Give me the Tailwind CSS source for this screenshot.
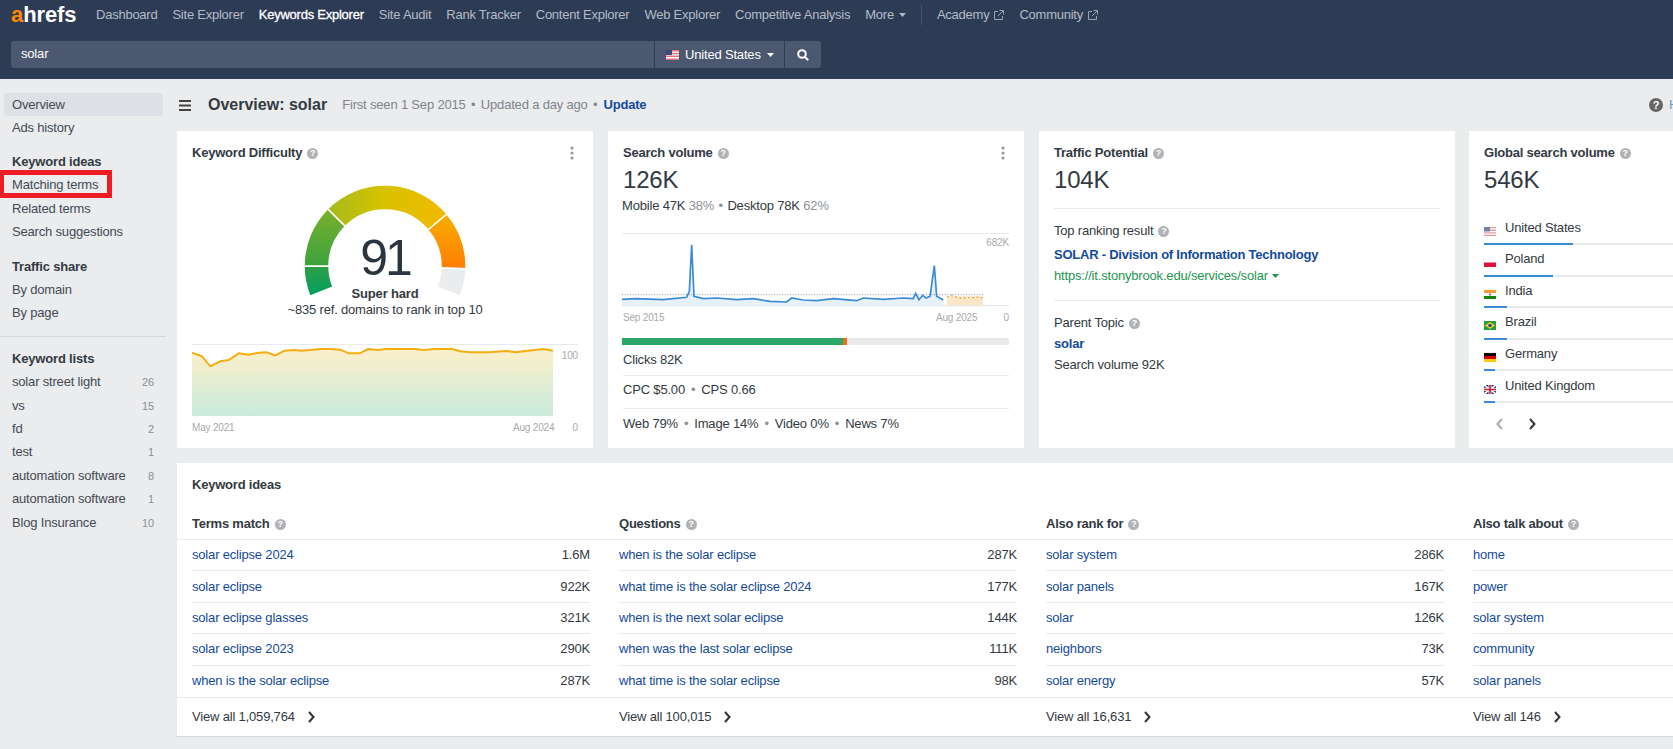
<!DOCTYPE html>
<html lang="en">
<head>
<meta charset="UTF-8" />
<title>Overview: solar</title>
<script src="https://cdn.jsdelivr.net/npm/@tailwindcss/browser@4"></script>
</head>
<body class="w-[1673px] h-[749px] overflow-hidden bg-[#ebecee] text-[13px] leading-[18px] tracking-[-0.18px] text-[#333a42] [font-family:'Liberation_Sans',Arial,sans-serif]">

<!-- top bar -->
<header class="h-[79px] bg-[#2e3b55] pl-[11px]">
  <nav class="h-[30px] flex items-center text-[#b4bbc8] tracking-[-0.24px]">
    <span class="w-[85px] text-[22px] leading-[30px] font-bold tracking-[-0.1px] text-white"><span class="text-[#ff8800]">a</span>hrefs</span>
    <div class="flex items-center gap-[15px]">
      <a>Dashboard</a>
      <a>Site Explorer</a>
      <a class="text-white [-webkit-text-stroke:0.3px_white]">Keywords Explorer</a>
      <a>Site Audit</a>
      <a>Rank Tracker</a>
      <a>Content Explorer</a>
      <a>Web Explorer</a>
      <a>Competitive Analysis</a>
      <a class="flex items-center gap-[5px]">More <svg width="7" height="4" viewBox="0 0 7 4"><path d="M0 0h7L3.5 4z" fill="#b4bbc8"/></svg></a>
      <span class="w-px h-[20px] bg-[#48546c]"></span>
      <a class="flex items-center gap-[5px]">Academy
        <svg width="10" height="10" viewBox="0 0 10 10" fill="none" stroke="#9aa3b3"><path d="M4 1.5H.5v8h8V6M5.500 .5h4v4M9.500 .5L4 6"/></svg>
      </a>
      <a class="flex items-center gap-[5px]">Community
        <svg width="10" height="10" viewBox="0 0 10 10" fill="none" stroke="#9aa3b3"><path d="M4 1.5H.5v8h8V6M5.500 .5h4v4M9.500 .5L4 6"/></svg>
      </a>
    </div>
  </nav>
  <div class="mt-[11px] w-[810px] h-[27px] flex gap-px text-white">
    <div class="w-[643px] bg-[#4b586f] rounded-l-[3px] pl-[10px] leading-[25px]">solar</div>
    <div class="w-[129px] bg-[#4b586f] flex items-center pl-[11px] gap-[6px]">
      <svg width="13" height="10" viewBox="0 0 13 10">
        <rect width="13" height="10" fill="#fff"/>
        <path d="M0 0h13v1.400H0zM0 2.800h13v1.400H0zM0 5.600h13v1.400H0zM0 8.400h13V10H0z" fill="#d8737c"/>
        <rect width="6" height="5" fill="#3c4a78"/>
      </svg>
      United States
      <svg width="7" height="4" viewBox="0 0 7 4"><path d="M0 0h7L3.500 4z" fill="#fff"/></svg>
    </div>
    <div class="flex-1 bg-[#4b586f] rounded-r-[3px] flex items-center justify-center">
      <svg width="12" height="12" viewBox="0 0 12 12" fill="none" stroke="#fff" stroke-width="2"><circle cx="5" cy="5" r="3.800"/><path d="M8 8l3.200 3.200"/></svg>
    </div>
  </div>
</header>

<div class="relative flex h-[670px]">
  <!-- sidebar -->
  <aside class="w-[166px] shrink-0 pt-[14px] text-[#444b54]">
    <div class="ml-[4px] w-[159px] h-[23.250px] pl-[8px] flex items-center bg-[#dfe0e6] rounded-[3px]">Overview</div>
    <div class="ml-[4px] pl-[8px] h-[23.250px] flex items-center">Ads history</div>

    <div class="mt-[11px] ml-[4px] pl-[8px] h-[23.250px] flex items-center font-bold text-[#333a42]">Keyword ideas</div>
    <div class="ml-[4px] pl-[8px] h-[23.250px] flex items-center">Matching terms</div>
    <div class="ml-[4px] pl-[8px] h-[23.250px] flex items-center">Related terms</div>
    <div class="ml-[4px] pl-[8px] h-[23.250px] flex items-center">Search suggestions</div>

    <div class="mt-[11.500px] ml-[4px] pl-[8px] h-[23.250px] flex items-center font-bold text-[#333a42]">Traffic share</div>
    <div class="ml-[4px] pl-[8px] h-[23.250px] flex items-center">By domain</div>
    <div class="ml-[4px] pl-[8px] h-[23.250px] flex items-center">By page</div>

    <div class="mt-[11.500px] h-px bg-[#d8d9dd]"></div>

    <div class="mt-[10px] ml-[4px] pl-[8px] h-[23.250px] flex items-center font-bold text-[#333a42]">Keyword lists</div>
    <div class="ml-[4px] w-[159px] pl-[8px] pr-[9px] h-[23.400px] flex items-center justify-between">solar street light <span class="text-[11px] text-[#8a8f96]">26</span></div>
    <div class="ml-[4px] w-[159px] pl-[8px] pr-[9px] h-[23.400px] flex items-center justify-between">vs <span class="text-[11px] text-[#8a8f96]">15</span></div>
    <div class="ml-[4px] w-[159px] pl-[8px] pr-[9px] h-[23.400px] flex items-center justify-between">fd <span class="text-[11px] text-[#8a8f96]">2</span></div>
    <div class="ml-[4px] w-[159px] pl-[8px] pr-[9px] h-[23.400px] flex items-center justify-between">test <span class="text-[11px] text-[#8a8f96]">1</span></div>
    <div class="ml-[4px] w-[159px] pl-[8px] pr-[9px] h-[23.400px] flex items-center justify-between">automation software <span class="text-[11px] text-[#8a8f96]">8</span></div>
    <div class="ml-[4px] w-[159px] pl-[8px] pr-[9px] h-[23.400px] flex items-center justify-between">automation software <span class="text-[11px] text-[#8a8f96]">1</span></div>
    <div class="ml-[4px] w-[159px] pl-[8px] pr-[9px] h-[23.400px] flex items-center justify-between">Blog Insurance <span class="text-[11px] text-[#8a8f96]">10</span></div>
  </aside>

  <!-- red annotation box -->
  <div class="absolute left-0 top-[91px] w-[112px] h-[28px] border-[5px] border-l-[4px] border-[#ee1c25]"></div>

  <main class="flex-1 min-w-0 overflow-hidden pl-[11px]">
    <div class="h-[52px] flex items-center">
      <svg class="ml-[2px]" width="12" height="11" viewBox="0 0 12 11" fill="#444"><path d="M0 0h12v2H0zM0 4.500h12v2H0zM0 9h12v2H0z"/></svg>
      <h1 class="ml-[17px] text-[16px] font-bold tracking-normal text-[#333a42]">Overview: solar</h1>
      <span class="ml-[15px] text-[#80858c]">First seen 1 Sep 2015 <span class="mx-[2px]">•</span> Updated a day ago <span class="mx-[2px]">•</span></span>
      <a class="ml-[4px] font-bold text-[#144a9c]">Update</a>
      <div class="ml-auto w-[24px] overflow-hidden flex items-center gap-[6px] text-[#6a9cc0]">
        <span class="w-[14px] h-[14px] shrink-0 rounded-full bg-[#666] text-white text-[11px] leading-[14px] font-bold text-center">?</span>
        <span>Help</span>
      </div>
    </div>

    <div class="flex gap-[15px] h-[317px]">
      <!-- keyword difficulty -->
      <section class="w-[416px] shrink-0 bg-white px-[15px] pt-[13px]">
        <div class="flex items-center justify-between">
          <div class="flex items-center gap-[5px] font-bold tracking-[-0.22px]">Keyword Difficulty
            <span class="w-[11px] h-[11px] rounded-full bg-[#b0b2b5] text-white text-[9px] leading-[11px] font-bold text-center">?</span>
          </div>
          <svg class="mr-[4px]" width="4" height="14" viewBox="0 0 4 14" fill="#999"><circle cx="2" cy="2" r="1.600"/><circle cx="2" cy="7" r="1.600"/><circle cx="2" cy="12" r="1.600"/></svg>
        </div>
        <div class="relative w-[170px] h-[120px] mx-auto mt-[19px]">
          <svg width="170" height="120" viewBox="0 0 170 120">
            <defs>
              <linearGradient id="gaugeA" x1="0" y1="0" x2="0" y2="1"><stop offset="0" stop-color="#2e9e45"/><stop offset="1" stop-color="#00a060"/></linearGradient>
              <linearGradient id="gaugeB" x1="0" y1="0" x2="0" y2="1"><stop offset="0" stop-color="#7cb02c"/><stop offset="1" stop-color="#3aa33e"/></linearGradient>
              <linearGradient id="gaugeC" x1="0" y1="0" x2="1" y2="0"><stop offset="0" stop-color="#a2bb1c"/><stop offset="0.45" stop-color="#d6c200"/><stop offset="1" stop-color="#f3b900"/></linearGradient>
              <linearGradient id="gaugeD" x1="0" y1="0" x2="0" y2="1"><stop offset="0" stop-color="#f7ae00"/><stop offset="1" stop-color="#ff7d00"/></linearGradient>
            </defs>
            <g stroke="#fff" stroke-width="1.500">
              <path d="M9.900 115.300A81 81 0 0 1 4 85H29A56 56 0 0 0 33.100 106Z" fill="url(#gaugeA)"/>
              <path d="M4 85A81 81 0 0 1 27.700 27.700L45.400 45.400A56 56 0 0 0 29 85Z" fill="url(#gaugeB)"/>
              <path d="M27.700 27.700A81 81 0 0 1 147 33L127.900 49A56 56 0 0 0 45.400 45.400Z" fill="url(#gaugeC)"/>
              <path d="M147 33A81 81 0 0 1 166 87.800L141 87A56 56 0 0 0 127.900 49Z" fill="url(#gaugeD)"/>
              <path d="M166 87.800A81 81 0 0 1 160.100 115.300L136.900 106A56 56 0 0 0 141 87Z" fill="#ebecee"/>
            </g>
          </svg>
          <div class="absolute inset-x-0 top-[52px] text-center text-[50px] leading-[51px] tracking-[-3px] text-[#2c3440]">91</div>
        </div>
        <div class="relative -mt-[15px] text-center leading-[16px]">
          <div class="font-bold">Super hard</div>
          <div>~835 ref. domains to rank in top 10</div>
        </div>
        <div class="mt-[26px] border-t border-[#e9eaec] flex justify-between">
          <svg class="block" width="361" height="71" viewBox="75 663 1083 213">
            <defs><linearGradient id="kdFill" x1="0" y1="0" x2="0" y2="1"><stop offset="0" stop-color="#fdf0c8"/><stop offset="1" stop-color="#c9eadd"/></linearGradient></defs>
            <path d="M75 686L105 697L130 727L160 712L185 708L215 688L245 692L270 687L298 685L325 694L352 680L380 678L405 680L460 675L490 675L520 677L545 688L578 688L603 675L635 678L655 675L745 675L770 678L800 675L855 675L880 682L910 685L965 685L1020 681L1048 685L1075 681L1130 675L1158 680V876H75Z" fill="url(#kdFill)"/>
            <path d="M75 686L105 697L130 727L160 712L185 708L215 688L245 692L270 687L298 685L325 694L352 680L380 678L405 680L460 675L490 675L520 677L545 688L578 688L603 675L635 678L655 675L745 675L770 678L800 675L855 675L880 682L910 685L965 685L1020 681L1048 685L1075 681L1130 675L1158 680" fill="none" stroke="#f5ad10" stroke-width="6"/>
          </svg>
          <span class="mt-[2px] text-[10px] leading-[18px] text-[#aaa]">100</span>
        </div>
        <div class="mt-[4px] flex text-[10px] leading-[16px] text-[#aaa]">
          <span class="w-[321px]">May 2021</span>
          <span class="w-[55px]">Aug 2024</span>
          <span class="ml-auto">0</span>
        </div>
      </section>

      <!-- search volume -->
      <section class="w-[416px] shrink-0 bg-white px-[15px] pt-[13px]">
        <div class="flex items-center justify-between">
          <div class="flex items-center gap-[5px] font-bold tracking-[-0.22px]">Search volume
            <span class="w-[11px] h-[11px] rounded-full bg-[#b0b2b5] text-white text-[9px] leading-[11px] font-bold text-center">?</span>
          </div>
          <svg class="mr-[4px]" width="4" height="14" viewBox="0 0 4 14" fill="#999"><circle cx="2" cy="2" r="1.600"/><circle cx="2" cy="7" r="1.600"/><circle cx="2" cy="12" r="1.600"/></svg>
        </div>
        <div class="mt-[3px] text-[24px] leading-[30px]">126K</div>
        <div class="mt-[2px] -ml-px">Mobile 47K <span class="text-[#8d9197]">38%</span> <span class="mx-[1px] text-[#8d9197]">•</span> Desktop 78K <span class="text-[#8d9197]">62%</span></div>
        <div class="relative mt-[18px] -ml-px border-t border-[#e9eaec]">
          <svg class="block" width="387" height="73" viewBox="156 328 1161 219">
            <rect x="1131" y="515" width="108" height="28" fill="#fde6c8"/>
            <path d="M156 524L200 522L280 525L350 518L358 500L365 360L372 515L400 522L440 520L500 525L550 522L600 530L650 532L665 520L700 526L740 528L790 522L860 528L880 520L940 524L1000 520L1030 522L1037 506L1047 525L1058 512L1068 520L1080 515L1093 423L1100 515L1120 526V543H156Z" fill="#e6f1fb"/>
            <path d="M156 510H1239" stroke="#777" stroke-width="2.500" stroke-dasharray="3 5" fill="none"/>
            <path d="M1131 517L1145 513L1160 518L1175 521L1190 518L1205 520L1220 517L1239 520" stroke="#f58a1f" stroke-width="3.500" stroke-dasharray="5 8" fill="none"/>
            <path d="M156 524L200 522L280 525L350 518L358 500L365 360L372 515L400 522L440 520L500 525L550 522L600 530L650 532L665 520L700 526L740 528L790 522L860 528L880 520L940 524L1000 520L1030 522L1037 506L1047 525L1058 512L1068 520L1080 515L1093 423L1100 515L1120 526" fill="none" stroke="#3a8ad8" stroke-width="5"/>
            <path d="M156 543H1317" stroke="#e3e4e7" stroke-width="3"/>
          </svg>
          <span class="absolute right-0 top-[2px] text-[10px] leading-[14px] text-[#aaa]">682K</span>
        </div>
        <div class="mt-[4px] flex text-[10px] leading-[14px] text-[#aaa]">
          <span class="w-[313px]">Sep 2015</span>
          <span>Aug 2025</span>
          <span class="ml-auto">0</span>
        </div>
        <div class="mt-[13px] -ml-px h-[7px] flex bg-[#e9eaec]">
          <div class="w-[221px] bg-[#2aa768]"></div>
          <div class="w-[4px] bg-[#f26c16]"></div>
        </div>
        <div class="h-[31px] flex items-center border-b border-[#e9eaec]">Clicks 82K</div>
        <div class="h-[33px] pb-[4px] flex items-center border-b border-[#e9eaec]">CPC $5.00 <span class="mx-[6px] text-[#8d9197]">•</span> CPS 0.66</div>
        <div class="h-[30px] flex items-center">Web 79% <span class="mx-[6px] text-[#8d9197]">•</span> Image 14% <span class="mx-[6px] text-[#8d9197]">•</span> Video 0% <span class="mx-[6px] text-[#8d9197]">•</span> News 7%</div>
      </section>

      <!-- traffic potential -->
      <section class="w-[416px] shrink-0 bg-white px-[15px] pt-[13px]">
        <div class="flex items-center gap-[5px] font-bold tracking-[-0.22px]">Traffic Potential
          <span class="w-[11px] h-[11px] rounded-full bg-[#b0b2b5] text-white text-[9px] leading-[11px] font-bold text-center">?</span>
        </div>
        <div class="mt-[3px] text-[24px] leading-[30px]">104K</div>
        <div class="mt-[13px] border-t border-[#e9eaec]"></div>
        <div class="mt-[13px] flex items-center gap-[5px]">Top ranking result
          <span class="w-[11px] h-[11px] rounded-full bg-[#b0b2b5] text-white text-[9px] leading-[11px] font-bold text-center">?</span>
        </div>
        <div class="mt-[6px] font-bold tracking-[-0.24px] text-[#144a9c]">SOLAR - Division of Information Technology</div>
        <div class="mt-[3px] flex items-center gap-[4px] text-[#1c9650]">https://it.stonybrook.edu/services/solar
          <svg width="7" height="4" viewBox="0 0 7 4"><path d="M0 0h7L3.500 4z" fill="#1c9650"/></svg>
        </div>
        <div class="mt-[15px] border-t border-[#e9eaec]"></div>
        <div class="mt-[13px] flex items-center gap-[5px]">Parent Topic
          <span class="w-[11px] h-[11px] rounded-full bg-[#b0b2b5] text-white text-[9px] leading-[11px] font-bold text-center">?</span>
        </div>
        <div class="mt-[3px] font-bold text-[#144a9c]">solar</div>
        <div class="mt-[3px]">Search volume 92K</div>
      </section>

      <!-- global volume -->
      <section class="w-[416px] shrink-0 -ml-px bg-white px-[15px] pt-[13px]">
        <div class="flex items-center gap-[5px] font-bold tracking-[-0.22px]">Global search volume
          <span class="w-[11px] h-[11px] rounded-full bg-[#b0b2b5] text-white text-[9px] leading-[11px] font-bold text-center">?</span>
        </div>
        <div class="mt-[3px] text-[24px] leading-[30px]">546K</div>
        <div class="mt-[18.400px]">
          <div class="h-[31.600px] flex flex-col justify-end">
            <div class="h-[29.600px] pb-[1px] flex items-center gap-[9px]">
              <svg class="mt-[7px] opacity-70" width="12" height="9" viewBox="0 0 12 9"><rect width="12" height="9" fill="#fff"/><path d="M0 0h12v1.300H0zM0 2.600h12v1.300H0zM0 5.200h12v1.300H0zM0 7.800h12V9H0z" fill="#d8737c"/><rect width="6" height="4.500" fill="#3c4a78"/></svg>
              United States
            </div>
            <div class="h-[2px] bg-[#e9eaec]"><div class="h-full w-[89px] bg-[#3a8ad8]"></div></div>
          </div>
          <div class="h-[31.600px] flex flex-col justify-end">
            <div class="h-[29.600px] pb-[1px] flex items-center gap-[9px]">
              <svg class="mt-[7px]" width="12" height="9" viewBox="0 0 12 9"><rect width="12" height="4.500" fill="#fff"/><rect y="4.500" width="12" height="4.500" fill="#dc143c"/></svg>
              Poland
            </div>
            <div class="h-[2px] bg-[#e9eaec]"><div class="h-full w-[69px] bg-[#3a8ad8]"></div></div>
          </div>
          <div class="h-[31.600px] flex flex-col justify-end">
            <div class="h-[29.600px] pb-[1px] flex items-center gap-[9px]">
              <svg class="mt-[7px]" width="12" height="9" viewBox="0 0 12 9"><rect width="12" height="3" fill="#ff9933"/><rect y="3" width="12" height="3" fill="#fff"/><rect y="6" width="12" height="3" fill="#138808"/><circle cx="6" cy="4.500" r="1.200" fill="#7a78b8"/></svg>
              India
            </div>
            <div class="h-[2px] bg-[#e9eaec]"><div class="h-full w-[23px] bg-[#3a8ad8]"></div></div>
          </div>
          <div class="h-[31.600px] flex flex-col justify-end">
            <div class="h-[29.600px] pb-[1px] flex items-center gap-[9px]">
              <svg class="mt-[7px]" width="12" height="9" viewBox="0 0 12 9"><rect width="12" height="9" fill="#229e45"/><path d="M6 1l5 3.500L6 8 1 4.500z" fill="#f2d21b"/><circle cx="6" cy="4.500" r="1.800" fill="#2b4aa0"/></svg>
              Brazil
            </div>
            <div class="h-[2px] bg-[#e9eaec]"><div class="h-full w-[23px] bg-[#3a8ad8]"></div></div>
          </div>
          <div class="h-[31.600px] flex flex-col justify-end">
            <div class="h-[29.600px] pb-[1px] flex items-center gap-[9px]">
              <svg class="mt-[7px]" width="12" height="9" viewBox="0 0 12 9"><rect width="12" height="3" fill="#000"/><rect y="3" width="12" height="3" fill="#dd0000"/><rect y="6" width="12" height="3" fill="#ffce00"/></svg>
              Germany
            </div>
            <div class="h-[2px] bg-[#e9eaec]"><div class="h-full w-[11px] bg-[#3a8ad8]"></div></div>
          </div>
          <div class="h-[31.600px] flex flex-col justify-end">
            <div class="h-[29.600px] pb-[1px] flex items-center gap-[9px]">
              <svg class="mt-[7px]" width="12" height="9" viewBox="0 0 12 9"><rect width="12" height="9" fill="#2c3a78"/><path d="M0 0l12 9M12 0L0 9" stroke="#fff" stroke-width="1.600"/><path d="M6 0v9M0 4.500h12" stroke="#fff" stroke-width="3"/><path d="M6 0v9M0 4.500h12" stroke="#cf142b" stroke-width="1.600"/></svg>
              United Kingdom
            </div>
            <div class="h-[2px] bg-[#e9eaec]"><div class="h-full w-[11px] bg-[#3a8ad8]"></div></div>
          </div>
        </div>
        <div class="mt-[15px] ml-[12px] flex gap-[26px]">
          <svg width="7" height="12" viewBox="0 0 7 12" fill="none" stroke="#aaa" stroke-width="2"><path d="M6 1L1.500 6 6 11"/></svg>
          <svg width="7" height="12" viewBox="0 0 7 12" fill="none" stroke="#333" stroke-width="2"><path d="M1 1l4.500 5L1 11"/></svg>
        </div>
      </section>
    </div>

    <!-- keyword ideas -->
    <section class="mt-[15px] w-[1709px] h-[273px] bg-white shadow-[0_1px_1px_rgba(0,0,0,0.08)]">
      <div class="pt-[13px] px-[15px] font-bold tracking-[-0.22px]">Keyword ideas</div>
      <div class="grid grid-cols-[398px_398px_398px_398px] gap-x-[29px] px-[15px] pt-[21px] pb-[6px] border-b border-[#e9eaec] font-bold tracking-[-0.22px]">
        <div class="flex items-center gap-[5px]">Terms match <span class="w-[11px] h-[11px] rounded-full bg-[#b0b2b5] text-white text-[9px] leading-[11px] font-bold text-center">?</span></div>
        <div class="flex items-center gap-[5px]">Questions <span class="w-[11px] h-[11px] rounded-full bg-[#b0b2b5] text-white text-[9px] leading-[11px] font-bold text-center">?</span></div>
        <div class="flex items-center gap-[5px]">Also rank for <span class="w-[11px] h-[11px] rounded-full bg-[#b0b2b5] text-white text-[9px] leading-[11px] font-bold text-center">?</span></div>
        <div class="flex items-center gap-[5px]">Also talk about <span class="w-[11px] h-[11px] rounded-full bg-[#b0b2b5] text-white text-[9px] leading-[11px] font-bold text-center">?</span></div>
      </div>
      <div class="grid grid-cols-[398px_398px_398px_398px] gap-x-[29px] px-[15px]">
        <div>
          <div class="h-[31.400px] flex items-center justify-between border-b border-[#e9eaec]"><a class="text-[#144a9c]">solar eclipse 2024</a><span>1.6M</span></div>
          <div class="h-[31.400px] flex items-center justify-between border-b border-[#e9eaec]"><a class="text-[#144a9c]">solar eclipse</a><span>922K</span></div>
          <div class="h-[31.400px] flex items-center justify-between border-b border-[#e9eaec]"><a class="text-[#144a9c]">solar eclipse glasses</a><span>321K</span></div>
          <div class="h-[31.400px] flex items-center justify-between border-b border-[#e9eaec]"><a class="text-[#144a9c]">solar eclipse 2023</a><span>290K</span></div>
          <div class="h-[31.400px] flex items-center justify-between"><a class="text-[#144a9c]">when is the solar eclipse</a><span>287K</span></div>
        </div>
        <div>
          <div class="h-[31.400px] flex items-center justify-between border-b border-[#e9eaec]"><a class="text-[#144a9c]">when is the solar eclipse</a><span>287K</span></div>
          <div class="h-[31.400px] flex items-center justify-between border-b border-[#e9eaec]"><a class="text-[#144a9c]">what time is the solar eclipse 2024</a><span>177K</span></div>
          <div class="h-[31.400px] flex items-center justify-between border-b border-[#e9eaec]"><a class="text-[#144a9c]">when is the next solar eclipse</a><span>144K</span></div>
          <div class="h-[31.400px] flex items-center justify-between border-b border-[#e9eaec]"><a class="text-[#144a9c]">when was the last solar eclipse</a><span>111K</span></div>
          <div class="h-[31.400px] flex items-center justify-between"><a class="text-[#144a9c]">what time is the solar eclipse</a><span>98K</span></div>
        </div>
        <div>
          <div class="h-[31.400px] flex items-center justify-between border-b border-[#e9eaec]"><a class="text-[#144a9c]">solar system</a><span>286K</span></div>
          <div class="h-[31.400px] flex items-center justify-between border-b border-[#e9eaec]"><a class="text-[#144a9c]">solar panels</a><span>167K</span></div>
          <div class="h-[31.400px] flex items-center justify-between border-b border-[#e9eaec]"><a class="text-[#144a9c]">solar</a><span>126K</span></div>
          <div class="h-[31.400px] flex items-center justify-between border-b border-[#e9eaec]"><a class="text-[#144a9c]">neighbors</a><span>73K</span></div>
          <div class="h-[31.400px] flex items-center justify-between"><a class="text-[#144a9c]">solar energy</a><span>57K</span></div>
        </div>
        <div>
          <div class="h-[31.400px] flex items-center border-b border-[#e9eaec]"><a class="text-[#144a9c]">home</a></div>
          <div class="h-[31.400px] flex items-center border-b border-[#e9eaec]"><a class="text-[#144a9c]">power</a></div>
          <div class="h-[31.400px] flex items-center border-b border-[#e9eaec]"><a class="text-[#144a9c]">solar system</a></div>
          <div class="h-[31.400px] flex items-center border-b border-[#e9eaec]"><a class="text-[#144a9c]">community</a></div>
          <div class="h-[31.400px] flex items-center"><a class="text-[#144a9c]">solar panels</a></div>
        </div>
      </div>
      <div class="grid grid-cols-[398px_398px_398px_398px] gap-x-[29px] px-[15px] h-[39px] items-center border-t border-[#e9eaec]">
        <a class="flex items-center gap-[13px]">View all 1,059,764 <svg width="7" height="12" viewBox="0 0 7 12" fill="none" stroke="#333" stroke-width="2"><path d="M1 1l4.500 5L1 11"/></svg></a>
        <a class="flex items-center gap-[13px]">View all 100,015 <svg width="7" height="12" viewBox="0 0 7 12" fill="none" stroke="#333" stroke-width="2"><path d="M1 1l4.500 5L1 11"/></svg></a>
        <a class="flex items-center gap-[13px]">View all 16,631 <svg width="7" height="12" viewBox="0 0 7 12" fill="none" stroke="#333" stroke-width="2"><path d="M1 1l4.500 5L1 11"/></svg></a>
        <a class="flex items-center gap-[13px]">View all 146 <svg width="7" height="12" viewBox="0 0 7 12" fill="none" stroke="#333" stroke-width="2"><path d="M1 1l4.500 5L1 11"/></svg></a>
      </div>
    </section>
  </main>
</div>
</body>
</html>
